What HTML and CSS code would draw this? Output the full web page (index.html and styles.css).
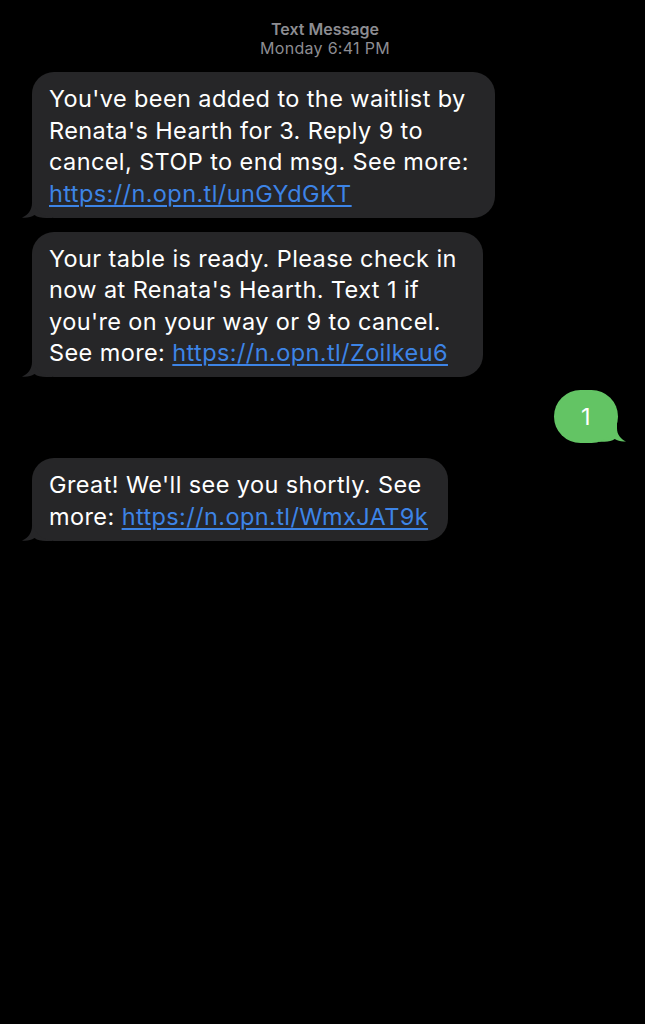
FILE: index.html
```html
<!DOCTYPE html>
<html lang="en">
<head>
<meta charset="utf-8">
<title>Messages</title>
<link rel="stylesheet" href="styles.css">
</head>
<body>
<main class="thread">
  <header class="thread-head">
    <div class="head-title">Text Message</div>
    <div class="head-time">Monday 6:41 PM</div>
  </header>

  <div class="msg msg-in">
    <p class="bubble">You've been added to the waitlist by&nbsp;<br>Renata's Hearth for 3. Reply 9 to&nbsp;<br>cancel, STOP to end msg. See more:&nbsp;<br><a class="link" href="#">https://n.opn.tl/unGYdGKT</a></p>
    <svg class="tail tail-in" viewBox="0 0 30 24" aria-hidden="true"><path d="M10,0 L10,9 C10,16 6,21 0,23.6 C5,24.2 9,23.2 12.5,21 C15.5,23.2 19,24 24,24 L30,24 L30,0 Z"/></svg>
  </div>

  <div class="msg msg-in">
    <p class="bubble">Your table is ready. Please check in&nbsp;<br>now at Renata's Hearth. Text 1 if&nbsp;<br>you're on your way or 9 to cancel.&nbsp;<br>See more: <a class="link" href="#">https://n.opn.tl/Zoilkeu6</a></p>
    <svg class="tail tail-in" viewBox="0 0 30 24" aria-hidden="true"><path d="M10,0 L10,9 C10,16 6,21 0,23.6 C5,24.2 9,23.2 12.5,21 C15.5,23.2 19,24 24,24 L30,24 L30,0 Z"/></svg>
  </div>

  <div class="msg msg-out">
    <p class="bubble bubble-out">1</p>
    <svg class="tail tail-out" viewBox="0 0 30 24" aria-hidden="true"><path d="M10,0 L10,9 C10,16 6,21 0,23.6 C5,24.2 9,23.2 12.5,21 C15.5,23.2 19,24 24,24 L30,24 L30,0 Z"/></svg>
  </div>

  <div class="msg msg-in">
    <p class="bubble">Great! We'll see you shortly. See&nbsp;<br>more: <a class="link" href="#">https://n.opn.tl/WmxJAT9k</a></p>
    <svg class="tail tail-in" viewBox="0 0 30 24" aria-hidden="true"><path d="M10,0 L10,9 C10,16 6,21 0,23.6 C5,24.2 9,23.2 12.5,21 C15.5,23.2 19,24 24,24 L30,24 L30,0 Z"/></svg>
  </div>
</main>
</body>
</html>
```

FILE: styles.css
```css
html, body {
  margin: 0;
  padding: 0;
  background: #000;
}

body {
  width: 645px;
  height: 1024px;
  font-family: Inter, "Noto Sans", "Liberation Sans", sans-serif;
  color: #fff;
}

.thread {
  display: flex;
  flex-direction: column;
  padding: 20px 27px 0 32px;
}

.thread-head {
  display: flex;
  flex-direction: column;
  align-items: center;
  color: #8d8d92;
  font-size: 16px;
  line-height: 18.5px;
  margin-bottom: 15px;
}

.head-title {
  font-weight: 600;
}

.head-time {
  font-weight: 400;
  letter-spacing: 0.3px;
}

.msg {
  position: relative;
  display: flex;
  margin-bottom: 14px;
}

.msg-in {
  justify-content: flex-start;
}

.msg-out {
  justify-content: flex-end;
  margin-top: -1px;
  margin-bottom: 15px;
}

.bubble {
  margin: 0;
  position: relative;
  z-index: 1;
  background: #262628;
  border-radius: 22px;
  padding: 11px 19px 8.5px 17px;
  font-size: 23.5px;
  line-height: 31.5px;
  white-space: nowrap;
  letter-spacing: 0.4px;
}

.bubble-out {
  background: #63c464;
  min-width: 64px;
  box-sizing: border-box;
  text-align: center;
  padding: 11px 17px 10.5px;
  border-radius: 27px;
}

.link {
  color: #3d84e6;
  text-decoration: underline;
  text-decoration-thickness: 1.5px;
  text-underline-offset: 3px;
}

.tail {
  position: absolute;
  bottom: 0;
  width: 30px;
  height: 24px;
  z-index: 0;
}

.tail-in {
  left: -10px;
  fill: #262628;
}

.tail-out {
  right: -8px;
  width: 27px;
  transform: scaleX(-1);
  fill: #63c464;
}
```
